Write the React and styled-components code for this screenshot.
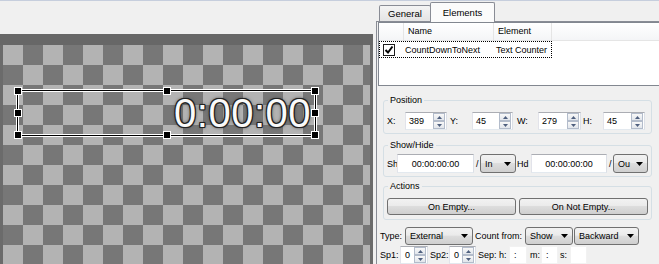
import React from 'react';
import styled, { createGlobalStyle } from 'styled-components';

const GlobalStyle = createGlobalStyle`
  html, body {
    margin: 0;
    padding: 0;
    background: #f0f0f0;
  }
  body {
    font-family: "Liberation Sans", Arial, sans-serif;
    font-size: 9px;
    color: #000;
  }
  * {
    box-sizing: border-box;
  }
`;

const Frame = styled.div`
  display: flex;
  width: 659px;
  height: 264px;
  overflow: hidden;
  border-top: 1px solid #c6cedd;
  background: #f0f0f0;
`;

// ---- canvas (left)

const CanvasColumn = styled.div`
  flex: none;
  width: 373px;
  display: flex;
  flex-direction: column;
`;

const TopBand = styled.div`
  flex: none;
  height: 33px;
  background: #f0f0f0;
`;

const RulerBand = styled.div`
  flex: none;
  height: 11px;
  background: #676767;
`;

const Stage = styled.div`
  flex: 1;
  display: flex;
  padding: 0 3px;
  background: #6b6b6b;
`;

const Checker = styled.div`
  flex: 1;
  position: relative;
  background: repeating-conic-gradient(#777777 0 25%, #b3b3b3 0 50%) 0 0 / 40px 40px;
`;

const SelBox = styled.div`
  position: absolute;
  left: 14px;
  top: 45px;
  width: 299px;
  height: 46px;
  border: 1px solid #000;
  box-shadow: 0 0 0 1px #fff, inset 0 0 0 1px #fff;
  display: flex;
  align-items: center;
  justify-content: flex-end;
  padding-right: 4px;
`;

const Handle = styled.div`
  position: absolute;
  left: calc(${(p) => p.$x}% - 4px);
  top: calc(${(p) => p.$y}% - 4px);
  width: 8px;
  height: 8px;
  background: #000;
  border: 1px solid #fff;
`;

const CounterText = styled.span`
  font-family: "Liberation Sans", Arial, sans-serif;
  font-size: 40px;
  line-height: 1;
  letter-spacing: 0.5px;
  color: #fafafa;
  text-shadow:
    1px 0 0 #222, -1px 0 0 #222, 0 1px 0 #222, 0 -1px 0 #222,
    1px 1px 0 #222, -1px -1px 0 #222, 1px -1px 0 #222, -1px 1px 0 #222,
    0 0 3px #333, 0 0 4px #555;
`;

// ---- side panel (right)

const SidePanel = styled.div`
  flex: none;
  width: 290px;
  margin-left: 3px;
  display: flex;
  flex-direction: column;
`;

const TabStrip = styled.div`
  flex: none;
  height: 20px;
  display: flex;
  align-items: flex-end;
  padding-left: 3px;
  position: relative;
  z-index: 1;
`;

const Tab = styled.div`
  width: ${(p) => p.$w}px;
  height: ${(p) => (p.$active ? 20 : 16)}px;
  margin-bottom: ${(p) => (p.$active ? -1 : 0)}px;
  margin-left: ${(p) => (p.$active ? -1 : 0)}px;
  border: 1px solid #898c95;
  border-bottom: none;
  border-radius: 2px 2px 0 0;
  background: ${(p) => (p.$active ? '#fbfbfb' : 'linear-gradient(#f4f4f4, #e4e4e4)')};
  display: flex;
  align-items: center;
  justify-content: center;
  font-size: 9.5px;
`;

const TabPage = styled.div`
  flex: 1;
  border: 1px solid #898c95;
  padding-left: 1px;
  display: flex;
  flex-direction: column;
  background: #f0f0f0;
`;

const ListView = styled.div`
  flex: none;
  height: 64px;
  border: 1px solid #828790;
  background: #fff;
  display: flex;
  flex-direction: column;
`;

const ListHeader = styled.div`
  height: 18px;
  display: flex;
  border-bottom: 1px solid #e5e5e5;
  background: linear-gradient(#ffffff, #f4f5f7);
`;

const HeadCell = styled.div`
  flex: none;
  width: ${(p) => p.$w}px;
  padding-left: 4px;
  border-right: 1px solid #e5e5e5;
  line-height: 17px;
`;

const ListRow = styled.div`
  width: 173px;
  height: 17px;
  display: flex;
  align-items: center;
  outline: 1px dotted #000;
  outline-offset: -1px;
`;

const RowCell = styled.div`
  flex: none;
  width: ${(p) => p.$w}px;
  display: flex;
  align-items: center;
  padding-left: ${(p) => p.$pl || 0}px;
`;

const CheckBox = styled.div`
  width: 12px;
  height: 12px;
  border: 1px solid #1c1c1c;
  background: #fff;
  display: flex;
  align-items: center;
  justify-content: center;
`;

const Group = styled.fieldset`
  flex: none;
  width: 269px;
  margin: ${(p) => p.$mt}px 0 0 5px;
  min-width: 0;
  padding: ${(p) => p.$pt}px 3px ${(p) => p.$pb}px 3px;
  border: 1px solid #d5dfe5;
  border-radius: 3px;
`;

const Legend = styled.legend`
  padding: 0 2px;
  margin-left: 1px;
  line-height: 11px;
  font-size: 9px;
`;

const Row = styled.div`
  display: flex;
  align-items: center;
  height: ${(p) => p.$h}px;
  margin: ${(p) => p.$mt || 0}px 0 0 ${(p) => p.$ml || 0}px;
  gap: ${(p) => p.$gap || 0}px;
`;

const Label = styled.span`
  flex: none;
  width: ${(p) => p.$w}px;
  padding-left: ${(p) => p.$pl || 0}px;
  white-space: nowrap;
`;

const SpinWrap = styled.div`
  flex: none;
  width: ${(p) => p.$w}px;
  height: 18px;
  display: flex;
  background: #fff;
  border: 1px solid;
  border-color: #abadb3 #dbdfe6 #e3e9ef #e2e3ea;
`;

const SpinValue = styled.span`
  flex: 1;
  padding-left: ${(p) => p.$pl}px;
  line-height: 16px;
`;

const SpinButtons = styled.div`
  flex: none;
  width: 13px;
  display: flex;
  flex-direction: column;
  padding: 0 1px 0 0;
`;

const SpinBtn = styled.div`
  flex: 1;
  border: 1px solid #b3bccb;
  background: linear-gradient(#f8f8f8, #e2e6ec);
  display: flex;
  align-items: center;
  justify-content: center;
`;

const TimeField = styled.div`
  flex: none;
  width: ${(p) => p.$w}px;
  height: 19px;
  background: #fff;
  border: 1px solid;
  border-color: #abadb3 #dbdfe6 #e3e9ef #e2e3ea;
  display: flex;
  align-items: center;
  justify-content: center;
`;

const HmsField = styled.div`
  flex: none;
  width: ${(p) => p.$w}px;
  height: 18px;
  background: #fff;
  border: 1px solid #f2f2f2;
  padding-left: 4px;
  line-height: 16px;
`;

const Combo = styled.div`
  flex: none;
  width: ${(p) => p.$w}px;
  height: ${(p) => p.$h}px;
  display: flex;
  align-items: center;
  justify-content: space-between;
  padding: 0 4px 0 4px;
  border: 1px solid #707070;
  border-radius: 3px;
  background: linear-gradient(#f2f2f2 0%, #ebebeb 45%, #dddddd 50%, #cfcfcf 100%);
  white-space: nowrap;
`;

const PushButton = styled.div`
  flex: none;
  width: 129px;
  height: 17px;
  display: flex;
  align-items: center;
  justify-content: center;
  border: 1px solid #707070;
  border-radius: 3px;
  background: linear-gradient(#f2f2f2 0%, #ebebeb 45%, #dddddd 50%, #cfcfcf 100%);
`;

const Arrow = ({ up }) => (
  <svg width="5" height="3" viewBox="0 0 5 3">
    <polygon points={up ? '0,3 5,3 2.5,0' : '0,0 5,0 2.5,3'} fill="#4e5f7e" />
  </svg>
);

const DropArrow = () => (
  <svg width="7" height="4" viewBox="0 0 7 4">
    <polygon points="0,0 7,0 3.5,4" fill="#000" />
  </svg>
);

const Spin = ({ w, value, pl = 3 }) => (
  <SpinWrap $w={w}>
    <SpinValue $pl={pl}>{value}</SpinValue>
    <SpinButtons>
      <SpinBtn><Arrow up /></SpinBtn>
      <SpinBtn><Arrow /></SpinBtn>
    </SpinButtons>
  </SpinWrap>
);

const Select = ({ w, h = 18, children }) => (
  <Combo $w={w} $h={h}>
    <span>{children}</span>
    <DropArrow />
  </Combo>
);

const handles = [
  [0, 0], [50, 0], [100, 0],
  [0, 50], [100, 50],
  [0, 100], [50, 100], [100, 100],
];

const App = () => (
  <>
    <GlobalStyle />
    <Frame>
      <CanvasColumn>
        <TopBand />
        <RulerBand />
        <Stage>
          <Checker>
            <SelBox>
              {handles.map(([x, y]) => (
                <Handle key={`${x}-${y}`} $x={x} $y={y} />
              ))}
              <CounterText>0:00:00</CounterText>
            </SelBox>
          </Checker>
        </Stage>
      </CanvasColumn>

      <SidePanel>
        <TabStrip>
          <Tab $w={52}>General</Tab>
          <Tab $w={65} $active>Elements</Tab>
        </TabStrip>
        <TabPage>
          <ListView>
            <ListHeader>
              <HeadCell $w={25} />
              <HeadCell $w={90}>Name</HeadCell>
              <HeadCell $w={58}>Element</HeadCell>
            </ListHeader>
            <ListRow>
              <RowCell $w={26} $pl={4}>
                <CheckBox>
                  <svg width="10" height="10" viewBox="0 0 10 10">
                    <path d="M1.5 5 L4 7.5 L8.5 1.5" stroke="#000" strokeWidth="2" fill="none" />
                  </svg>
                </CheckBox>
              </RowCell>
              <RowCell $w={91}>CountDownToNext</RowCell>
              <RowCell $w={56}>Text Counter</RowCell>
            </ListRow>
          </ListView>

          <Group $mt={9} $pt={6} $pb={3}>
            <Legend>Position</Legend>
            <Row $h={18}>
              <Label $w={18}>X:</Label>
              <Spin w={42} value="389" />
              <Label $w={25} $pl={3}>Y:</Label>
              <Spin w={41} value="45" />
              <Label $w={25} $pl={4}>W:</Label>
              <Spin w={43} value="279" />
              <Label $w={22} $pl={2}>H:</Label>
              <Spin w={42} value="45" />
            </Row>
          </Group>

          <Group $mt={6} $pt={3} $pb={3}>
            <Legend>Show/Hide</Legend>
            <Row $h={19}>
              <Label $w={10}>Sh</Label>
              <TimeField $w={77}>00:00:00:00</TimeField>
              <Label $w={6} $pl={2}>/</Label>
              <Select w={36} h={19}>In</Select>
              <Label $w={15} $pl={1}>Hd</Label>
              <TimeField $w={76}>00:00:00:00</TimeField>
              <Label $w={6} $pl={2}>/</Label>
              <Select w={35} h={19}>Ou</Select>
            </Row>
          </Group>

          <Group $mt={4} $pt={6} $pb={4}>
            <Legend>Actions</Legend>
            <Row $h={17} $gap={3}>
              <PushButton>On Empty...</PushButton>
              <PushButton>On Not Empty...</PushButton>
            </Row>
          </Group>

          <Row $h={18} $mt={7} $ml={2}>
            <Label $w={25}>Type:</Label>
            <Select w={68}>External</Select>
            <Label $w={52} $pl={2}>Count from:</Label>
            <Select w={48}>Show</Select>
            <Label $w={1} />
            <Select w={65}>Backward</Select>
          </Row>

          <Row $h={18} $mt={1} $ml={2}>
            <Label $w={20}>Sp1:</Label>
            <Spin w={28} value="0" pl={4} />
            <Label $w={21} $pl={2}>Sp2:</Label>
            <Spin w={27} value="0" pl={4} />
            <Label $w={23} $pl={2}>Sep:</Label>
            <Label $w={10}>h:</Label>
            <HmsField $w={18}>:</HmsField>
            <Label $w={14} $pl={3}>m:</Label>
            <HmsField $w={17}>:</HmsField>
            <Label $w={12} $pl={2}>s:</Label>
            <HmsField $w={17} />
          </Row>
        </TabPage>
      </SidePanel>
    </Frame>
  </>
);

export default App;
